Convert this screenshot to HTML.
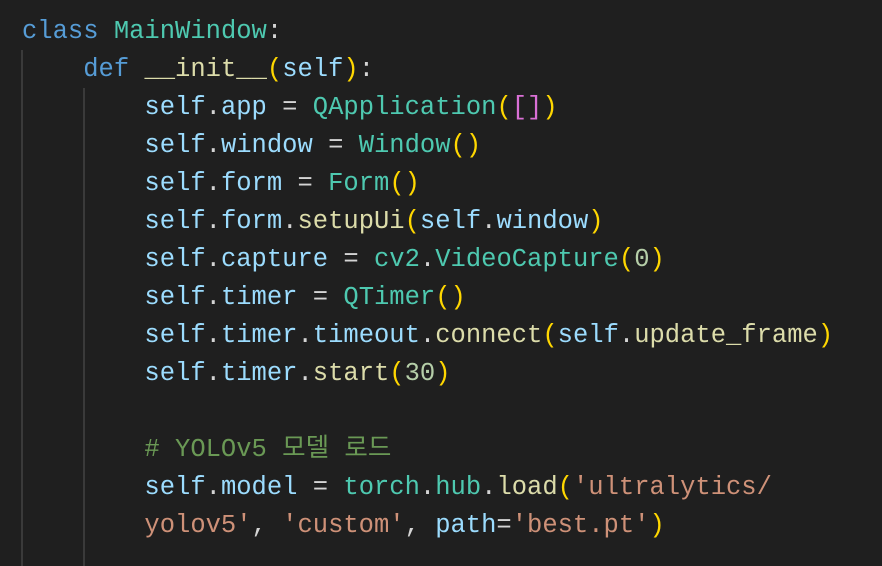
<!DOCTYPE html>
<html><head><meta charset="utf-8"><style>
body{margin:0;background:#1f1f1f;width:882px;height:566px;overflow:hidden;position:relative}
.c{position:absolute;left:22px;top:13px;font-family:"Liberation Mono","Noto Sans CJK KR",monospace;font-size:25.5px;line-height:38px;color:#d4d4d4;white-space:pre}
.g{position:absolute;width:2px;background:#3a3a3a}
.k{color:#569cd6}.t{color:#4ec9b0}.f{color:#dcdcaa}.v{color:#9cdcfe}.y{color:#ffd700}.p{color:#da70d6}.s{color:#ce9178}.m{color:#6a9955}.n{color:#b5cea8}
</style></head><body>
<div class="g" style="left:21px;top:50px;height:516px"></div>
<div class="g" style="left:83px;top:88px;height:478px"></div>
<div class="c"><span class="k">class</span> <span class="t">MainWindow</span>:
    <span class="k">def</span> <span class="f">__init__</span><span class="y">(</span><span class="v">self</span><span class="y">)</span>:
        <span class="v">self</span>.<span class="v">app</span> = <span class="t">QApplication</span><span class="y">(</span><span class="p">[]</span><span class="y">)</span>
        <span class="v">self</span>.<span class="v">window</span> = <span class="t">Window</span><span class="y">()</span>
        <span class="v">self</span>.<span class="v">form</span> = <span class="t">Form</span><span class="y">()</span>
        <span class="v">self</span>.<span class="v">form</span>.<span class="f">setupUi</span><span class="y">(</span><span class="v">self</span>.<span class="v">window</span><span class="y">)</span>
        <span class="v">self</span>.<span class="v">capture</span> = <span class="t">cv2</span>.<span class="t">VideoCapture</span><span class="y">(</span><span class="n">0</span><span class="y">)</span>
        <span class="v">self</span>.<span class="v">timer</span> = <span class="t">QTimer</span><span class="y">()</span>
        <span class="v">self</span>.<span class="v">timer</span>.<span class="v">timeout</span>.<span class="f">connect</span><span class="y">(</span><span class="v">self</span>.<span class="f">update_frame</span><span class="y">)</span>
        <span class="v">self</span>.<span class="v">timer</span>.<span class="f">start</span><span class="y">(</span><span class="n">30</span><span class="y">)</span>

        <span class="m"># YOLOv5 모델 로드</span>
        <span class="v">self</span>.<span class="v">model</span> = <span class="t">torch</span>.<span class="t">hub</span>.<span class="f">load</span><span class="y">(</span><span class="s">'ultralytics/</span>
        <span class="s">yolov5'</span>, <span class="s">'custom'</span>, <span class="v">path</span>=<span class="s">'best.pt'</span><span class="y">)</span>
</div>
</body></html>
